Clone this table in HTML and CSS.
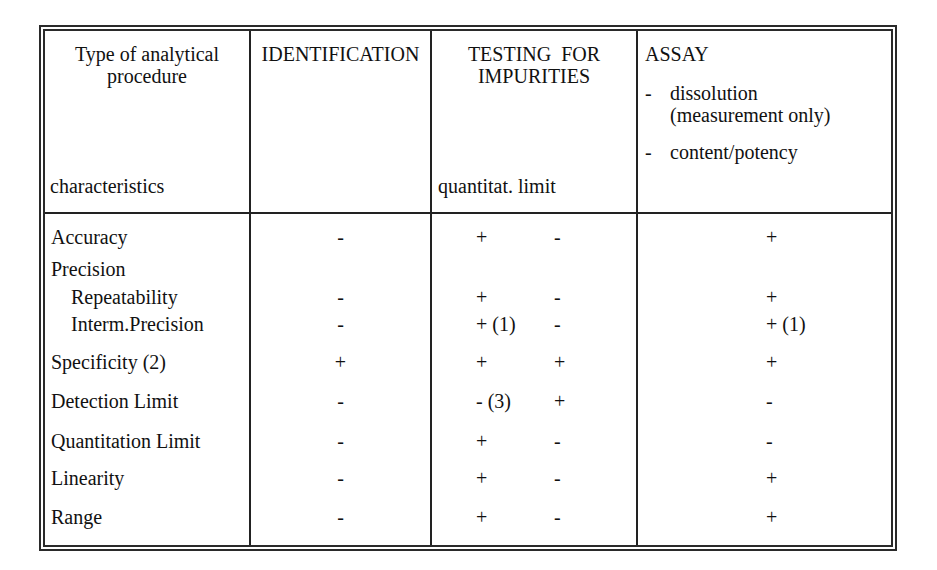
FILE: index.html
```html
<!DOCTYPE html>
<html lang="en">
<head>
<meta charset="utf-8">
<title>Validation characteristics</title>
<link rel="stylesheet" href="styles.css">
</head>
<body>
<div class="frame">
  <table class="grid">
    <colgroup>
      <col class="c1"><col class="c2"><col class="c3"><col class="c4">
    </colgroup>
    <thead>
      <tr>
        <th>
          <div class="head">
            <div class="center">Type of analytical<br>procedure</div>
            <div class="bottom">characteristics</div>
          </div>
        </th>
        <th>
          <div class="head">
            <div class="center">IDENTIFICATION</div>
          </div>
        </th>
        <th>
          <div class="head">
            <div class="center">TESTING&nbsp; FOR<br>IMPURITIES</div>
            <div class="bottom">quantitat. limit</div>
          </div>
        </th>
        <th>
          <div class="head assay">
            <div>ASSAY</div>
            <div class="item first"><span class="dash">-</span><span>dissolution<br>(measurement only)</span></div>
            <div class="item second"><span class="dash">-</span><span>content/potency</span></div>
          </div>
        </th>
      </tr>
    </thead>
    <tbody>
      <tr class="r1">
        <td class="name">Accuracy</td>
        <td class="ident">-</td>
        <td class="test"><span class="q">+</span><span class="l">-</span></td>
        <td class="assay-v">+</td>
      </tr>
      <tr class="r2">
        <td class="name">Precision</td>
        <td class="ident"></td>
        <td class="test"></td>
        <td class="assay-v"></td>
      </tr>
      <tr class="r3">
        <td class="name sub">Repeatability</td>
        <td class="ident">-</td>
        <td class="test"><span class="q">+</span><span class="l">-</span></td>
        <td class="assay-v">+</td>
      </tr>
      <tr class="r4">
        <td class="name sub">Interm.Precision</td>
        <td class="ident">-</td>
        <td class="test"><span class="q">+ (1)</span><span class="l">-</span></td>
        <td class="assay-v">+ (1)</td>
      </tr>
      <tr class="r5">
        <td class="name">Specificity (2)</td>
        <td class="ident">+</td>
        <td class="test"><span class="q">+</span><span class="l">+</span></td>
        <td class="assay-v">+</td>
      </tr>
      <tr class="r6">
        <td class="name">Detection Limit</td>
        <td class="ident">-</td>
        <td class="test"><span class="q">- (3)</span><span class="l">+</span></td>
        <td class="assay-v">-</td>
      </tr>
      <tr class="r7">
        <td class="name">Quantitation Limit</td>
        <td class="ident">-</td>
        <td class="test"><span class="q">+</span><span class="l">-</span></td>
        <td class="assay-v">-</td>
      </tr>
      <tr class="r8">
        <td class="name">Linearity</td>
        <td class="ident">-</td>
        <td class="test"><span class="q">+</span><span class="l">-</span></td>
        <td class="assay-v">+</td>
      </tr>
      <tr class="r9">
        <td class="name">Range</td>
        <td class="ident">-</td>
        <td class="test"><span class="q">+</span><span class="l">-</span></td>
        <td class="assay-v">+</td>
      </tr>
    </tbody>
  </table>
</div>
</body>
</html>
```
FILE: styles.css
```css
html, body {
  margin: 0;
  padding: 0;
  background: #ffffff;
}

body {
  font-family: "Liberation Serif", "Times New Roman", serif;
  font-size: 20px;
  line-height: 22px;
  color: #111111;
}

.frame {
  margin: 25px 0 0 39px;
  width: 858px;
  box-sizing: border-box;
  border: 6px double #2a2a2a;
}

.grid {
  width: 846px;
  table-layout: fixed;
  border-collapse: separate;
  border-spacing: 0;
}

.c1 { width: 204px; }
.c2 { width: 181px; }
.c3 { width: 206px; }
.c4 { width: 255px; }

.grid th,
.grid td {
  padding: 0;
  vertical-align: top;
  text-align: left;
  font-weight: normal;
  white-space: nowrap;
}

.grid th + th,
.grid td + td {
  border-left: 2px solid #222;
}

.grid th {
  border-bottom: 2px solid #222;
}

.head {
  height: 181px;
  box-sizing: border-box;
  padding: 12px 0 15px;
  display: flex;
  flex-direction: column;
}

.head .center {
  text-align: center;
}

.head .bottom {
  margin-top: auto;
}

th:first-child .bottom { padding-left: 5px; }
th:nth-child(3) .bottom { padding-left: 6px; }

.assay {
  padding-left: 7px;
}

.item {
  display: flex;
}

.item.first { margin-top: 17px; }
.item.second { margin-top: 15px; }

.dash {
  width: 25px;
  flex: none;
}

/* body rows */
.name { padding-left: 6px !important; }
.name.sub { padding-left: 26px !important; }

.ident { text-align: center !important; }

.test { padding-left: 44px !important; }
.test .q {
  display: inline-block;
  width: 78px;
}

.assay-v { padding-left: 128px !important; }

.r1 td { padding-top: 12px; }
.r2 td { padding-top: 10px; }
.r3 td { padding-top: 6px; }
.r4 td { padding-top: 5px; }
.r5 td { padding-top: 16px; }
.r6 td { padding-top: 17px; }
.r7 td { padding-top: 18px; }
.r8 td { padding-top: 15px; }
.r9 td { padding-top: 17px; padding-bottom: 17px; }
```
